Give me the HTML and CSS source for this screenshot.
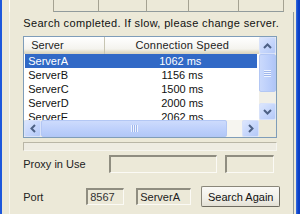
FILE: index.html
```
<!DOCTYPE html>
<html>
<head>
<meta charset="utf-8">
<link rel="stylesheet" href="styles.css">
</head>
<body>
<div class="frame">
  <div class="edge-l"></div>
  <div class="client">
    <div class="tabs">
      <div class="tab sel"></div>
      <div class="tab"></div>
      <div class="tab"></div>
      <div class="tab"></div>
      <div class="tab"></div>
      <div class="tab"></div>
      <div class="tab rest"></div>
    </div>
    <div class="panel">
      <div class="msg">Search completed. If slow, please change server.</div>
      <div class="list">
        <div class="list-main">
          <div class="hdr">
            <div class="hc c1">Server</div>
            <div class="hc c2">Connection Speed</div>
          </div>
          <div class="row selected"><span class="c1">ServerA</span><span class="c2">1062 ms</span></div>
          <div class="row"><span class="c1">ServerB</span><span class="c2">1156 ms</span></div>
          <div class="row"><span class="c1">ServerC</span><span class="c2">1500 ms</span></div>
          <div class="row"><span class="c1">ServerD</span><span class="c2">2000 ms</span></div>
          <div class="row"><span class="c1">ServerE</span><span class="c2">2062 ms</span></div>
        </div>
        <div class="vscroll">
          <div class="sbtn"><svg width="9" height="6" viewBox="0 0 9 6"><path d="M1 5 L4.5 1.5 L8 5" fill="none" stroke="#4D6185" stroke-width="2"/></svg></div>
          <div class="vthumb"><div class="grip-v"></div></div>
          <div class="track"></div>
          <div class="sbtn"><svg width="9" height="6" viewBox="0 0 9 6"><path d="M1 1 L4.5 4.5 L8 1" fill="none" stroke="#4D6185" stroke-width="2"/></svg></div>
        </div>
        <div class="hscroll">
          <div class="sbtn"><svg width="6" height="9" viewBox="0 0 6 9"><path d="M5 1 L1.5 4.5 L5 8" fill="none" stroke="#4D6185" stroke-width="2"/></svg></div>
          <div class="hthumb"><div class="grip-h"></div></div>
          <div class="htrack"></div>
          <div class="sbtn"><svg width="6" height="9" viewBox="0 0 6 9"><path d="M1 1 L4.5 4.5 L1 8" fill="none" stroke="#4D6185" stroke-width="2"/></svg></div>
        </div>
        <div class="corner"></div>
      </div>
      <div class="progress"></div>
      <div class="line proxy">
        <div class="lbl lbl-proxy">Proxy in Use</div>
        <div class="box box-p1"></div>
        <div class="box box-p2"></div>
      </div>
      <div class="line port">
        <div class="lbl lbl-port">Port</div>
        <div class="box box-port">8567</div>
        <div class="box box-srv">ServerA</div>
        <button class="btn">Search Again</button>
      </div>
    </div>
  </div>
  <div class="edge-r"></div>
</div>
</body>
</html>
```
FILE: styles.css
```
* { box-sizing: border-box; }
html, body { margin: 0; padding: 0; }
body {
  width: 300px; height: 214px; overflow: hidden;
  font-family: "Liberation Sans", Arial, sans-serif;
  font-size: 11px; color: #000;
  background: #ECE9D8;
}
.frame { display: flex; height: 214px; }
.edge-l { width: 3px; background: #1E58DC; }
.edge-r { width: 5px; background: linear-gradient(90deg, #3A6FE0 0, #0B42C9 2px, #0A3CC0 100%); }
.client {
  flex: 1; display: flex; flex-direction: column;
  padding-left: 7px; padding-right: 2px;
  background: #ECE9D8;
}
.tabs {
  height: 12px; display: grid;
  grid-template-columns: 45px 45px 48px 42px 50px 45px 1fr;
}
.tab {
  border-right: 1px solid #A5A292;
  border-bottom: 1px solid #919B9C;
  background: #ECE9D8;
}
.tab.sel { border-bottom: none; border-left: 1px solid #fff; }
.tab.rest { border-right: none; border-bottom: none; }
.panel {
  flex: 1; display: flex; flex-direction: column;
  border-left: 1px solid #F8F7F2; border-right: 1px solid #919B9C;
  padding: 0 13px;
}
.msg { margin-top: 5px; line-height: 13px; height: 13px; white-space: nowrap; color: #111; letter-spacing: 0.35px; }
.list {
  margin-top: 6px; width: 254px; height: 102px;
  border: 1px solid #7F9DB9; background: #fff;
  display: grid;
  grid-template-columns: 235px 17px;
  grid-template-rows: 83px 17px;
}
.list-main { overflow: hidden; }
.hdr {
  height: 17px; display: flex;
  background: linear-gradient(#FFFFFF 0, #F4F3EE 12px, #E2DEC9 15px, #D6D2C2 17px);
}
.hc { line-height: 16px; white-space: nowrap; color: #222; }
.hdr .c1 { width: 99px; padding-left: 7px; border-right: 1px solid #C7C5B2; }
.hdr .c2 { width: 154px; text-align: center; flex: none; letter-spacing: 0.2px; }
.row { height: 14px; line-height: 14px; display: flex; white-space: nowrap; color: #111; }
.row .c1 { width: 99px; padding-left: 4px; }
.row .c2 { width: 154px; text-align: center; flex: none; }
.row.selected { background: #3169C6; color: #fff; margin-left: 1px; margin-right: 2px; }
.row.selected .c1 { width: 98px; padding-left: 3px; }
.vscroll {
  display: flex; flex-direction: column;
  background: #F1EFE7;
}
.sbtn {
  flex: none; width: 17px; height: 17px;
  display: flex; align-items: center; justify-content: center;
  background: linear-gradient(135deg, #DCE6FD 0, #C3D4FB 60%, #B4C8F6 100%);
  border: 1px solid #D8E2FA; border-radius: 2px;
}
.vthumb {
  height: 38px; flex: none;
  background: linear-gradient(90deg, #CAD9FC, #BBCEFB 60%, #B0C6F7);
  border: 1px solid #B3C7F4; border-radius: 2px;
  display: flex; align-items: center; justify-content: center;
}
.grip-v { width: 7px; height: 7px; background: repeating-linear-gradient(#EEF3FE 0 1px, #9FB6EC 1px 2px); }
.track { flex: 1; }
.hscroll {
  display: flex; background: #F1EFE7;
}
.hthumb {
  width: 186px; flex: none;
  background: linear-gradient(#CDDBFC, #BCCFFB 60%, #B2C8F8);
  border: 1px solid #B3C7F4; border-radius: 2px;
  display: flex; align-items: center; justify-content: center;
}
.grip-h { width: 7px; height: 7px; background: repeating-linear-gradient(90deg, #EEF3FE 0 1px, #9FB6EC 1px 2px); }
.htrack { flex: 1; background: #F6F5F0; }
.corner { background: #ECE9D8; }
.progress {
  margin-top: 4px; width: 254px; height: 9px;
  border-top: 1px solid #B9B6A6; border-left: 1px solid #B9B6A6;
  border-right: 1px solid #F6F5EF; border-bottom: 1px solid #F6F5EF;
  background: #EEECE2;
}
.line { display: flex; align-items: center; }
.proxy { margin-top: 4px; height: 18px; }
.port { margin-top: 13px; height: 21px; }
.lbl { white-space: nowrap; color: #222; flex: none; }
.lbl-proxy { width: 86px; }
.lbl-port { width: 63px; }
.box {
  flex: none; height: 18px;
  border-top: 2px solid #8F8D80; border-left: 2px solid #8F8D80;
  border-right: 1px solid #FBFAF5; border-bottom: 1px solid #FBFAF5;
  background: #ECE9D8; line-height: 14px; padding-left: 2px;
  white-space: nowrap; color: #222;
}
.box-p1 { width: 108px; }
.box-p2 { width: 49px; margin-left: 8px; }
.box-port { width: 38px; height: 17px; color: #333; }
.box-srv { width: 55px; height: 17px; margin-left: 12px; }
.btn {
  flex: none; margin-left: 10px; width: 79px; height: 21px; padding: 0;
  font-family: "Liberation Sans", Arial, sans-serif; font-size: 11px; color: #111;
  background: linear-gradient(#FAF9F5, #F0EFE8 60%, #E3E0D4);
  border: 1px solid #8A877A; border-right-color: #6E6B60; border-bottom-color: #6E6B60;
  border-radius: 2px;
}
```
